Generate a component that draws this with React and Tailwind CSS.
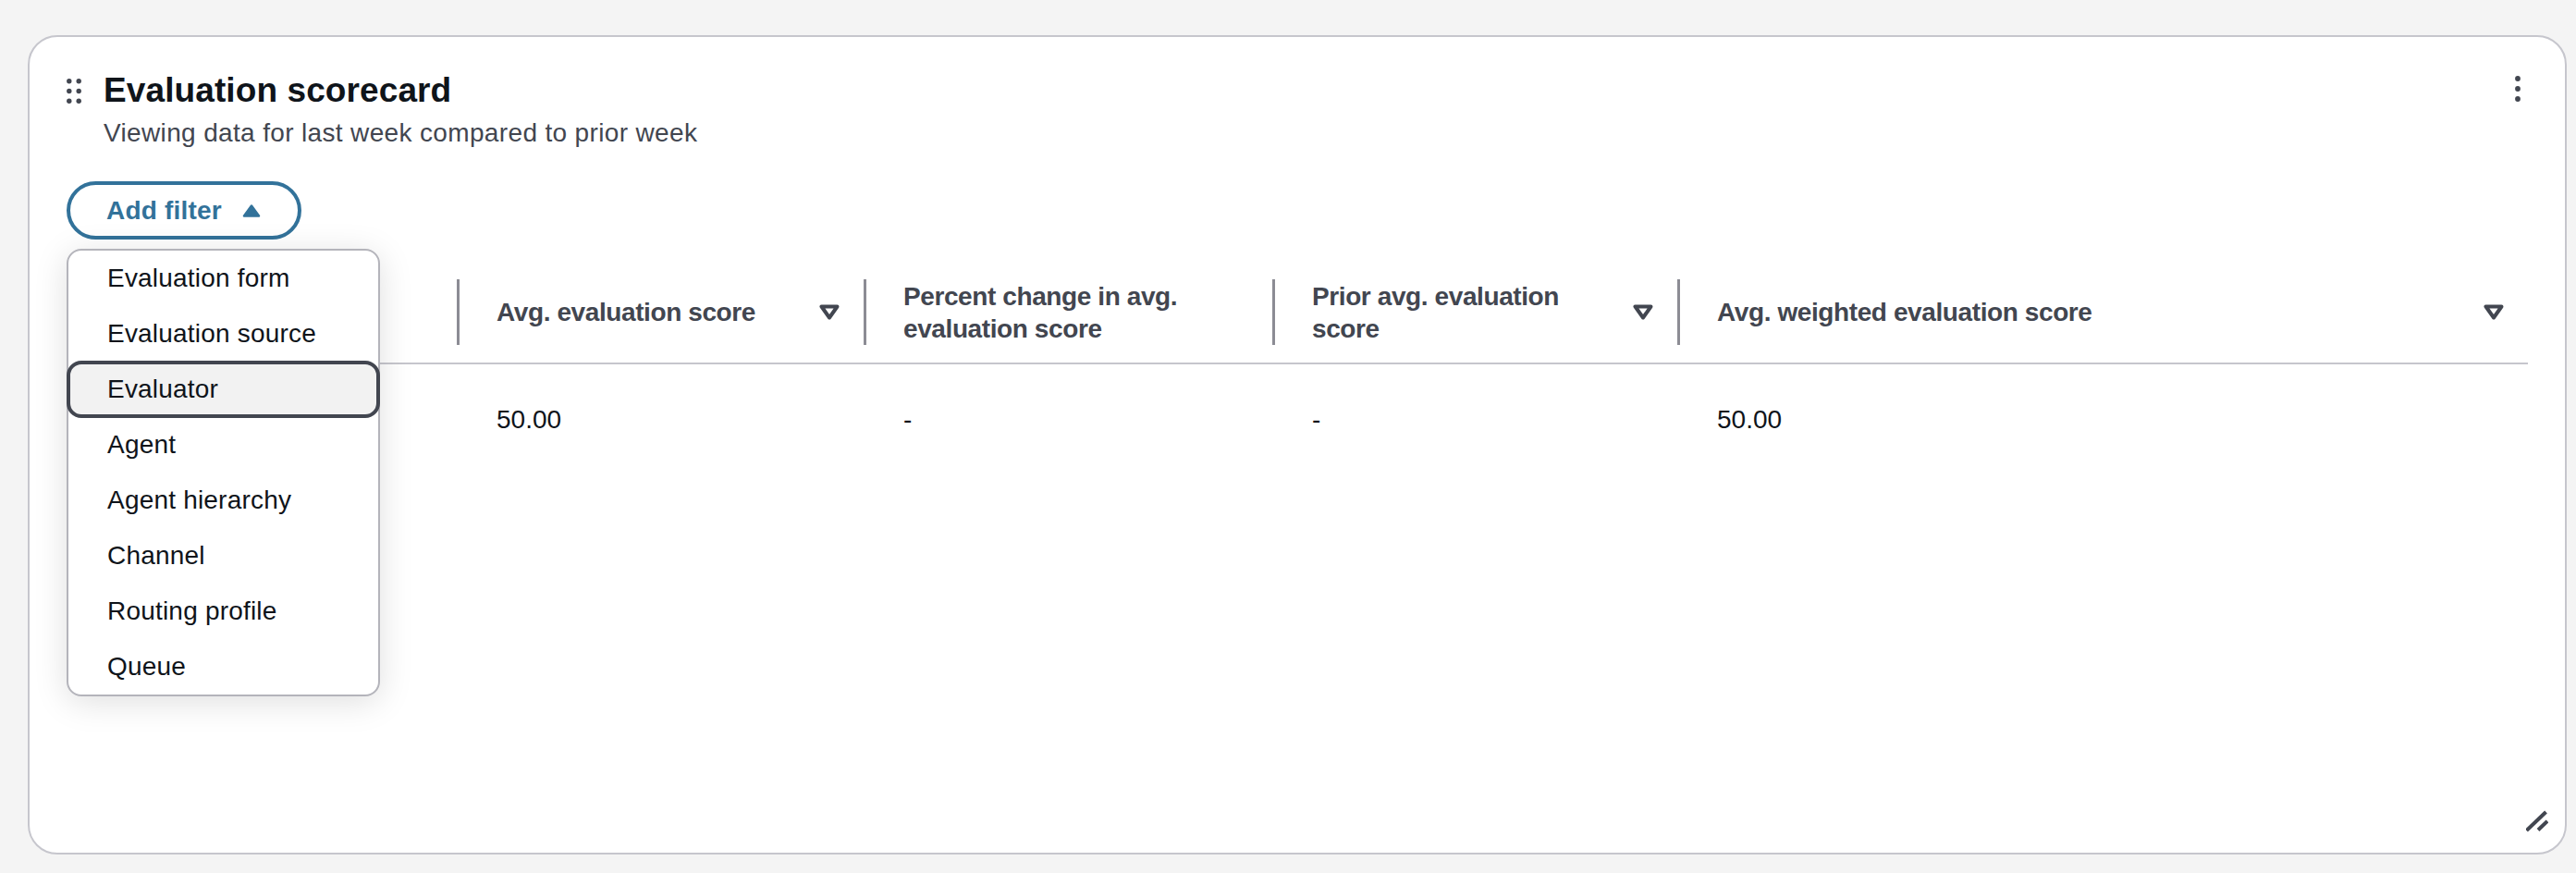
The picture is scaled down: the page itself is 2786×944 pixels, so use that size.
import React from "react";

const filterOptions = [
    "Evaluation form",
    "Evaluation source",
    "Evaluator",
    "Agent",
    "Agent hierarchy",
    "Channel",
    "Routing profile",
    "Queue",
];

// 先頭列はドロップダウンの下に隠れている
const columns = [
    { key: "first", label: "", sortable: false, width: "w-[422px]", value: "" },
    { key: "avg", label: "Avg. evaluation score", sortable: true, width: "w-[440px]", value: "50.00" },
    { key: "pct", label: "Percent change in avg. evaluation score", sortable: false, width: "w-[442px]", value: "-" },
    { key: "prior", label: "Prior avg. evaluation score", sortable: true, width: "w-[438px]", value: "-" },
    { key: "weighted", label: "Avg. weighted evaluation score", sortable: true, width: "flex-1", value: "50.00" },
];

function SortIcon() {
    return (
        <svg width="22" height="17" viewBox="0 0 22 17" className="shrink-0">
            <polygon
                points="2.5,2.5 19.5,2.5 11,14.5"
                fill="none"
                stroke="#424650"
                strokeWidth="4"
                strokeLinejoin="round"
            />
        </svg>
    );
}

function DragHandle() {
    return (
        <svg width="16" height="27" viewBox="0 0 16 27" className="shrink-0">
            {[2.8, 13.2].map((cx) =>
                [2.8, 13.5, 24.2].map((cy) => (
                    <circle key={cx + "-" + cy} cx={cx} cy={cy} r="2.7" fill="#424650" />
                ))
            )}
        </svg>
    );
}

function MoreIcon() {
    return (
        <svg width="22" height="30" viewBox="0 0 22 30">
            <circle cx="11" cy="4" r="2.9" fill="#424650" />
            <circle cx="11" cy="15" r="2.9" fill="#424650" />
            <circle cx="11" cy="26" r="2.9" fill="#424650" />
        </svg>
    );
}

function ResizeHandle() {
    return (
        <svg width="24" height="24" viewBox="0 0 24 24">
            <line x1="0.5" y1="22" x2="21.5" y2="2" stroke="#424650" strokeWidth="4" />
            <line x1="13" y1="21.5" x2="23" y2="12" stroke="#424650" strokeWidth="4" />
        </svg>
    );
}

export default function App() {
    return (
        <div
            className="min-h-[944px] bg-[#f4f4f4] pl-[30px] pr-[10px] pt-[38px] pb-[20px]"
            style={{ fontFamily: '"Liberation Sans", Arial, sans-serif' }}
        >
            <div className="flex h-[886px] flex-col rounded-[32px] border-2 border-[#c6c6cd] bg-white">
                <div className="px-[40px] pt-[36px]">
                    {/* ヘッダー */}
                    <div className="flex items-start justify-between">
                        <div className="flex items-start gap-[24px]">
                            <div className="pt-[9px]">
                                <DragHandle />
                            </div>
                            <div>
                                <h2 className="text-[37px] font-bold leading-[44px] tracking-[0.1px] text-[#0f141a]">
                                    Evaluation scorecard
                                </h2>
                                <p className="mt-[4px] text-[28px] leading-[40px] tracking-[0.35px] text-[#424650]">
                                    Viewing data for last week compared to prior week
                                </p>
                            </div>
                        </div>
                        <div className="pt-[5px]">
                            <MoreIcon />
                        </div>
                    </div>

                    {/* フィルター */}
                    <div className="relative z-10 mt-[32px] w-fit">
                        <button className="flex h-[63px] w-[254px] items-center gap-[22px] rounded-full border-4 border-[#32729a] bg-white pl-[39px] text-[28px] font-bold leading-[40px] tracking-[0.2px] text-[#32729a]">
                            <span>Add filter</span>
                            <svg width="20" height="14" viewBox="0 0 20 14">
                                <polygon
                                    points="2,12.5 18,12.5 10,1.5"
                                    fill="#32729a"
                                    stroke="#32729a"
                                    strokeWidth="2.5"
                                    strokeLinejoin="round"
                                />
                            </svg>
                        </button>

                        <div className="absolute left-0 top-[73px] w-[339px] rounded-[16px] border-2 border-[#b4b4bb] bg-white shadow-[0_6px_36px_rgba(0,0,0,0.13)]">
                            {filterOptions.map((opt) =>
                                opt === "Evaluator" ? (
                                    <div
                                        key={opt}
                                        className="relative mx-[-2px] my-[-1px] flex h-[62px] items-center rounded-[16px] border-4 border-[#424650] bg-[#f2f2f2] pl-[40px] text-[28px] leading-[40px] tracking-[0.2px] text-[#0f141a]"
                                    >
                                        {opt}
                                    </div>
                                ) : (
                                    <div
                                        key={opt}
                                        className="flex h-[60px] items-center pl-[42px] text-[28px] leading-[40px] tracking-[0.2px] text-[#0f141a]"
                                    >
                                        {opt}
                                    </div>
                                )
                            )}
                        </div>
                    </div>

                    {/* テーブル */}
                    <div className="mt-[24px]">
                        <div className="flex h-[111px] border-b-2 border-[#c6c6cd]">
                            {columns.map((c, i) => (
                                <div key={c.key} className={"flex items-center " + c.width}>
                                    {i > 0 && <div className="h-[71px] w-[3px] shrink-0 bg-[#8c8c94]" />}
                                    <div className="flex flex-1 items-center justify-between gap-[16px] pl-[40px] pr-[26px]">
                                        <span className="text-[28px] font-bold leading-[35px] tracking-[-0.4px] text-[#424650]">
                                            {c.key === "pct" ? (
                                                <>
                                                    Percent change in avg.
                                                    <br />
                                                    evaluation score
                                                </>
                                            ) : c.key === "prior" ? (
                                                <>
                                                    Prior avg. evaluation
                                                    <br />
                                                    score
                                                </>
                                            ) : (
                                                c.label
                                            )}
                                        </span>
                                        {c.sortable && <SortIcon />}
                                    </div>
                                </div>
                            ))}
                        </div>
                        <div className="flex h-[120px] items-center">
                            {columns.map((c) => (
                                <div
                                    key={c.key}
                                    className={"pl-[43px] text-[28px] leading-[40px] text-[#0f141a] " + c.width}
                                >
                                    {c.value}
                                </div>
                            ))}
                        </div>
                    </div>
                </div>

                <div className="flex-1" />

                <div className="flex justify-end pb-[22px] pr-[18px]">
                    <ResizeHandle />
                </div>
            </div>
        </div>
    );
}
